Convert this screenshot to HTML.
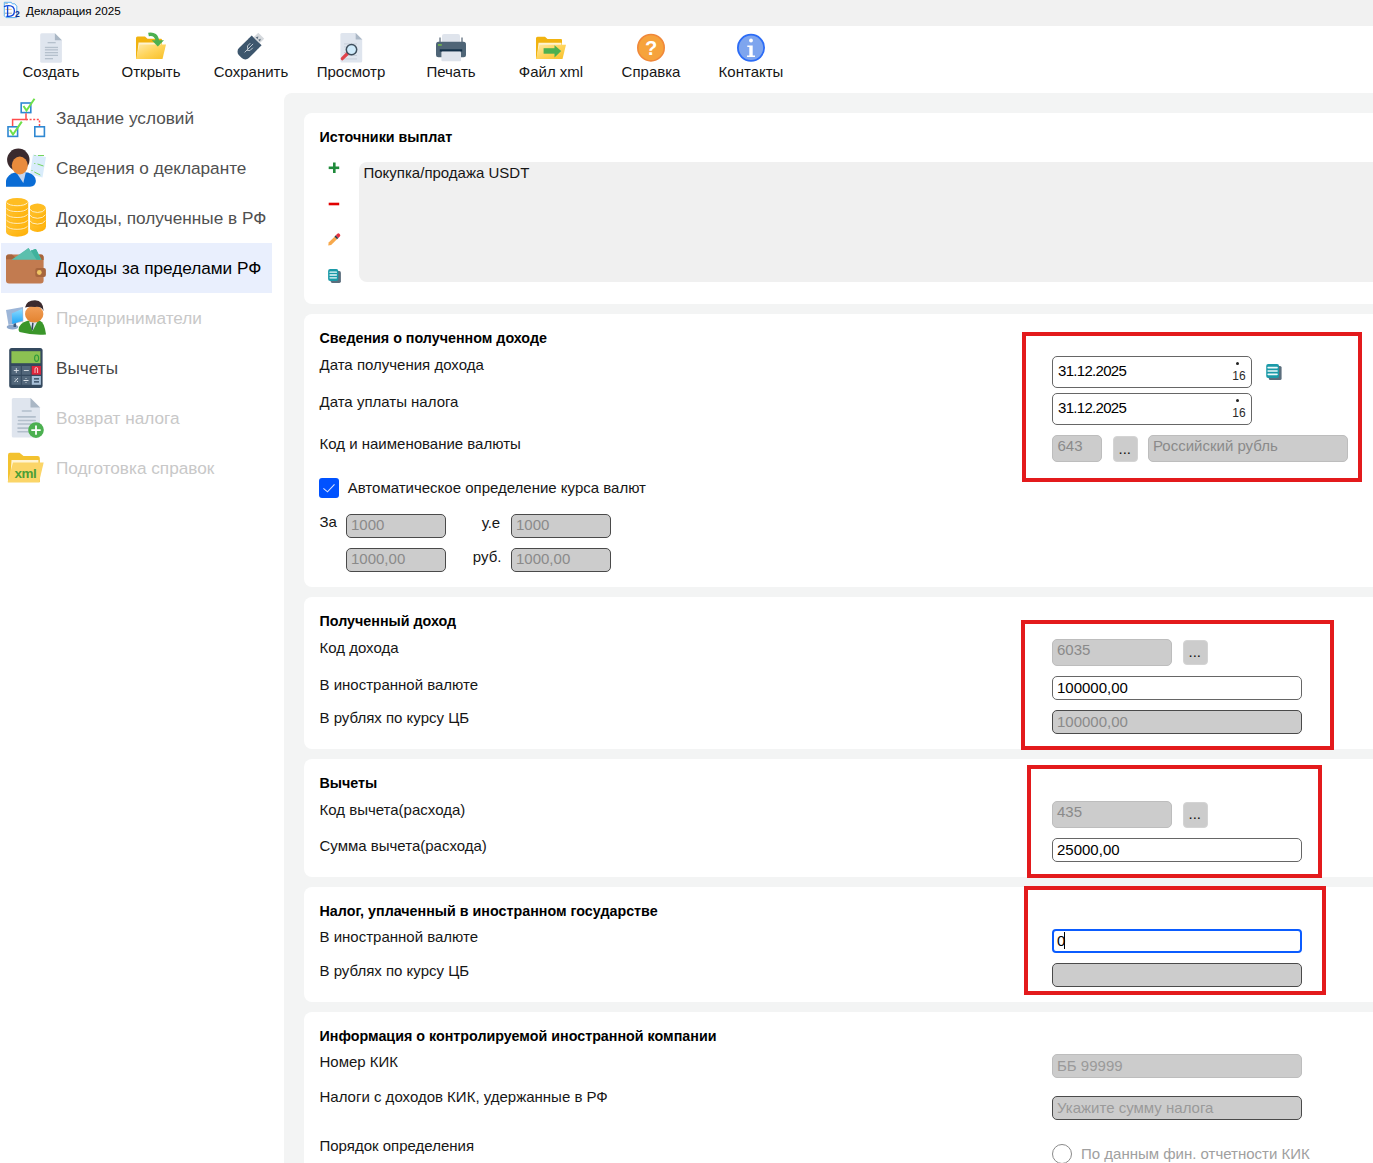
<!DOCTYPE html>
<html><head><meta charset="utf-8"><title>Декларация 2025</title>
<style>
html,body{margin:0;padding:0;width:1373px;height:1163px;overflow:hidden;background:#fff;position:relative}
.t{position:absolute;white-space:nowrap;font-family:"Liberation Sans",sans-serif}
.b{position:absolute}
</style></head><body>
<div class="b" style="left:0px;top:0px;width:1373px;height:25.5px;background:#f1f1f1"></div>
<div class="t" style="left:26px;top:3.15px;font-size:11.7px;line-height:15px;font-weight:400;color:#000;">Декларация 2025</div>
<div class="t" style="left:-9.0px;width:120px;text-align:center;top:61.70px;font-size:15px;line-height:19px;font-weight:400;color:#161616">Создать</div>
<div class="t" style="left:91.0px;width:120px;text-align:center;top:61.70px;font-size:15px;line-height:19px;font-weight:400;color:#161616">Открыть</div>
<div class="t" style="left:191.0px;width:120px;text-align:center;top:61.70px;font-size:15px;line-height:19px;font-weight:400;color:#161616">Сохранить</div>
<div class="t" style="left:291.0px;width:120px;text-align:center;top:61.70px;font-size:15px;line-height:19px;font-weight:400;color:#161616">Просмотр</div>
<div class="t" style="left:391.0px;width:120px;text-align:center;top:61.70px;font-size:15px;line-height:19px;font-weight:400;color:#161616">Печать</div>
<div class="t" style="left:491.0px;width:120px;text-align:center;top:61.70px;font-size:15px;line-height:19px;font-weight:400;color:#161616">Файл xml</div>
<div class="t" style="left:591.0px;width:120px;text-align:center;top:61.70px;font-size:15px;line-height:19px;font-weight:400;color:#161616">Справка</div>
<div class="t" style="left:691.0px;width:120px;text-align:center;top:61.70px;font-size:15px;line-height:19px;font-weight:400;color:#161616">Контакты</div>
<div class="b" style="left:1px;top:243px;width:271px;height:50px;background:#e9effd"></div>
<div class="t" style="left:56px;top:107.04px;font-size:17.2px;line-height:22px;font-weight:400;color:#505050;">Задание условий</div>
<div class="t" style="left:56px;top:157.04px;font-size:17.2px;line-height:22px;font-weight:400;color:#505050;">Сведения о декларанте</div>
<div class="t" style="left:56px;top:207.04px;font-size:17.2px;line-height:22px;font-weight:400;color:#505050;">Доходы, полученные в РФ</div>
<div class="t" style="left:56px;top:257.04px;font-size:17.2px;line-height:22px;font-weight:400;color:#000;">Доходы за пределами РФ</div>
<div class="t" style="left:56px;top:307.04px;font-size:17.2px;line-height:22px;font-weight:400;color:#c8c8c8;">Предприниматели</div>
<div class="t" style="left:56px;top:357.04px;font-size:17.2px;line-height:22px;font-weight:400;color:#484848;">Вычеты</div>
<div class="t" style="left:56px;top:407.04px;font-size:17.2px;line-height:22px;font-weight:400;color:#c8c8c8;">Возврат налога</div>
<div class="t" style="left:56px;top:457.04px;font-size:17.2px;line-height:22px;font-weight:400;color:#c8c8c8;">Подготовка справок</div>
<div class="b" style="left:284px;top:93px;width:1200px;height:1200px;background:#f3f4f4;border-radius:8px"></div>
<div class="b" style="left:304px;top:112.5px;width:1200px;height:191.5px;background:#fff;border-radius:8px"></div>
<div class="b" style="left:304px;top:314px;width:1200px;height:273px;background:#fff;border-radius:8px"></div>
<div class="b" style="left:304px;top:597px;width:1200px;height:152px;background:#fff;border-radius:8px"></div>
<div class="b" style="left:304px;top:759px;width:1200px;height:118px;background:#fff;border-radius:8px"></div>
<div class="b" style="left:304px;top:887px;width:1200px;height:115px;background:#fff;border-radius:8px"></div>
<div class="b" style="left:304px;top:1012px;width:1200px;height:300px;background:#fff;border-radius:8px"></div>
<div class="t" style="left:319.5px;top:127.55px;font-size:14.3px;line-height:18px;font-weight:700;color:#000;">Источники выплат</div>
<div class="b" style="left:359px;top:162px;width:1200px;height:120px;background:#f0f0f0;border-radius:8px"></div>
<div class="t" style="left:363.5px;top:162.70px;font-size:15px;line-height:19px;font-weight:400;color:#161616;">Покупка/продажа USDT</div>
<div class="t" style="left:319.5px;top:329.05px;font-size:14.3px;line-height:18px;font-weight:700;color:#000;">Сведения о полученном доходе</div>
<div class="t" style="left:319.5px;top:354.70px;font-size:15px;line-height:19px;font-weight:400;color:#161616;">Дата получения дохода</div>
<div class="t" style="left:319.5px;top:391.70px;font-size:15px;line-height:19px;font-weight:400;color:#161616;">Дата уплаты налога</div>
<div class="t" style="left:319.5px;top:433.70px;font-size:15px;line-height:19px;font-weight:400;color:#161616;">Код и наименование валюты</div>
<div class="t" style="left:347.7px;top:478.20px;font-size:15px;line-height:19px;font-weight:400;color:#161616;">Автоматическое определение курса валют</div>
<div class="t" style="left:319.5px;top:512.10px;font-size:15px;line-height:19px;font-weight:400;color:#161616;">За</div>
<div class="t" style="left:481.7px;top:513.00px;font-size:15px;line-height:19px;font-weight:400;color:#161616;">у.е</div>
<div class="t" style="left:472.8px;top:546.70px;font-size:15px;line-height:19px;font-weight:400;color:#161616;">руб.</div>
<div class="t" style="left:319.5px;top:612.05px;font-size:14.3px;line-height:18px;font-weight:700;color:#000;">Полученный доход</div>
<div class="t" style="left:319.5px;top:637.70px;font-size:15px;line-height:19px;font-weight:400;color:#161616;">Код дохода</div>
<div class="t" style="left:319.5px;top:674.70px;font-size:15px;line-height:19px;font-weight:400;color:#161616;">В иностранной валюте</div>
<div class="t" style="left:319.5px;top:708.20px;font-size:15px;line-height:19px;font-weight:400;color:#161616;">В рублях по курсу ЦБ</div>
<div class="t" style="left:319.5px;top:774.05px;font-size:14.3px;line-height:18px;font-weight:700;color:#000;">Вычеты</div>
<div class="t" style="left:319.5px;top:799.70px;font-size:15px;line-height:19px;font-weight:400;color:#161616;">Код вычета(расхода)</div>
<div class="t" style="left:319.5px;top:836.20px;font-size:15px;line-height:19px;font-weight:400;color:#161616;">Сумма вычета(расхода)</div>
<div class="t" style="left:319.5px;top:901.65px;font-size:14.3px;line-height:18px;font-weight:700;color:#000;">Налог, уплаченный в иностранном государстве</div>
<div class="t" style="left:319.5px;top:927.40px;font-size:15px;line-height:19px;font-weight:400;color:#161616;">В иностранной валюте</div>
<div class="t" style="left:319.5px;top:961.40px;font-size:15px;line-height:19px;font-weight:400;color:#161616;">В рублях по курсу ЦБ</div>
<div class="t" style="left:319.5px;top:1027.05px;font-size:14.3px;line-height:18px;font-weight:700;color:#000;">Информация о контролируемой иностранной компании</div>
<div class="t" style="left:319.5px;top:1052.00px;font-size:15px;line-height:19px;font-weight:400;color:#161616;">Номер КИК</div>
<div class="t" style="left:319.5px;top:1086.50px;font-size:15px;line-height:19px;font-weight:400;color:#161616;">Налоги с доходов КИК, удержанные в РФ</div>
<div class="t" style="left:319.5px;top:1136.30px;font-size:15px;line-height:19px;font-weight:400;color:#161616;">Порядок определения</div>
<div class="b" style="left:1052px;top:356px;width:200px;height:32px;background:#fff;border:1px solid #666;border-radius:5px;box-sizing:border-box"></div>
<div class="t" style="left:1058px;top:360.90px;font-size:15px;line-height:19px;font-weight:400;color:#000;"><span style="letter-spacing:-0.7px">31.12.2025</span></div>
<div class="b" style="left:1052px;top:393px;width:200px;height:32px;background:#fff;border:1px solid #666;border-radius:5px;box-sizing:border-box"></div>
<div class="t" style="left:1058px;top:397.90px;font-size:15px;line-height:19px;font-weight:400;color:#000;"><span style="letter-spacing:-0.7px">31.12.2025</span></div>
<div class="t" style="left:1232.3px;top:369.34px;font-size:12px;line-height:15px;font-weight:400;color:#2a2a2a;">16</div>
<div class="b" style="left:1236px;top:362px;width:3px;height:3px;background:#222;border-radius:50%"></div>
<div class="t" style="left:1232.3px;top:406.34px;font-size:12px;line-height:15px;font-weight:400;color:#2a2a2a;">16</div>
<div class="b" style="left:1236px;top:399px;width:3px;height:3px;background:#222;border-radius:50%"></div>
<div class="b" style="left:1052px;top:435px;width:50px;height:27px;background:#cccccc;border:1px solid #bdbdbd;border-radius:5px;box-sizing:border-box"></div>
<div class="t" style="left:1057.5px;top:436.40px;font-size:15px;line-height:19px;font-weight:400;color:#8a8a8a;">643</div>
<div class="b" style="left:1112.5px;top:435.5px;width:25px;height:26px;background:#cccccc;border:1px solid #d4d4d4;border-radius:4px;box-sizing:border-box"></div>
<div class="t" style="left:1118.5px;top:438.70px;font-size:15px;line-height:19px;font-weight:400;color:#111;">...</div>
<div class="b" style="left:1148px;top:435px;width:200px;height:27px;background:#cccccc;border:1px solid #bdbdbd;border-radius:5px;box-sizing:border-box"></div>
<div class="t" style="left:1153px;top:436.40px;font-size:15px;line-height:19px;font-weight:400;color:#8a8a8a;">Российский рубль</div>
<div class="b" style="left:1022px;top:332px;width:340px;height:150px;border:4px solid #e31a1c;box-sizing:border-box"></div>
<div class="b" style="left:319px;top:478px;width:20px;height:20px;background:#0052ff;border-radius:3px"></div>
<svg class="b" style="left:319px;top:478px" width="20" height="20"><path d="M4.4 10.3 L8.5 13.8 L15.5 6.3" stroke="#d6e2ff" stroke-width="1.1" fill="none"/></svg>
<div class="b" style="left:346px;top:514px;width:100px;height:24px;background:#cccccc;border:1px solid #4a4a4a;border-radius:5px;box-sizing:border-box"></div>
<div class="t" style="left:351px;top:515.30px;font-size:15px;line-height:19px;font-weight:400;color:#8a8a8a;">1000</div>
<div class="b" style="left:511px;top:514px;width:100px;height:24px;background:#cccccc;border:1px solid #4a4a4a;border-radius:5px;box-sizing:border-box"></div>
<div class="t" style="left:516px;top:515.30px;font-size:15px;line-height:19px;font-weight:400;color:#8a8a8a;">1000</div>
<div class="b" style="left:346px;top:548px;width:100px;height:24px;background:#cccccc;border:1px solid #4a4a4a;border-radius:5px;box-sizing:border-box"></div>
<div class="t" style="left:351px;top:549.30px;font-size:15px;line-height:19px;font-weight:400;color:#8a8a8a;">1000,00</div>
<div class="b" style="left:511px;top:548px;width:100px;height:24px;background:#cccccc;border:1px solid #4a4a4a;border-radius:5px;box-sizing:border-box"></div>
<div class="t" style="left:516px;top:549.30px;font-size:15px;line-height:19px;font-weight:400;color:#8a8a8a;">1000,00</div>
<div class="b" style="left:1052px;top:639px;width:120px;height:27px;background:#cccccc;border:1px solid #bdbdbd;border-radius:5px;box-sizing:border-box"></div>
<div class="t" style="left:1057px;top:640.20px;font-size:15px;line-height:19px;font-weight:400;color:#8a8a8a;">6035</div>
<div class="b" style="left:1182.5px;top:640px;width:25px;height:25px;background:#cccccc;border:1px solid #d4d4d4;border-radius:4px;box-sizing:border-box"></div>
<div class="t" style="left:1188.5px;top:642.20px;font-size:15px;line-height:19px;font-weight:400;color:#111;">...</div>
<div class="b" style="left:1052px;top:676px;width:250px;height:24px;background:#fff;border:1px solid #666;border-radius:5px;box-sizing:border-box"></div>
<div class="t" style="left:1057px;top:677.70px;font-size:15px;line-height:19px;font-weight:400;color:#000;">100000,00</div>
<div class="b" style="left:1052px;top:710px;width:250px;height:24px;background:#cccccc;border:1px solid #4a4a4a;border-radius:5px;box-sizing:border-box"></div>
<div class="t" style="left:1057px;top:711.70px;font-size:15px;line-height:19px;font-weight:400;color:#8a8a8a;">100000,00</div>
<div class="b" style="left:1021px;top:620px;width:313px;height:130px;border:4px solid #e31a1c;box-sizing:border-box"></div>
<div class="b" style="left:1052px;top:801px;width:120px;height:27px;background:#cccccc;border:1px solid #bdbdbd;border-radius:5px;box-sizing:border-box"></div>
<div class="t" style="left:1057px;top:802.20px;font-size:15px;line-height:19px;font-weight:400;color:#8a8a8a;">435</div>
<div class="b" style="left:1182.5px;top:801.5px;width:25px;height:26px;background:#cccccc;border:1px solid #d4d4d4;border-radius:4px;box-sizing:border-box"></div>
<div class="t" style="left:1188.5px;top:803.70px;font-size:15px;line-height:19px;font-weight:400;color:#111;">...</div>
<div class="b" style="left:1052px;top:838px;width:250px;height:24px;background:#fff;border:1px solid #666;border-radius:5px;box-sizing:border-box"></div>
<div class="t" style="left:1057px;top:839.70px;font-size:15px;line-height:19px;font-weight:400;color:#000;">25000,00</div>
<div class="b" style="left:1027px;top:765px;width:295px;height:113px;border:4px solid #e31a1c;box-sizing:border-box"></div>
<div class="b" style="left:1052px;top:929px;width:250px;height:23.5px;background:#fff;border:2px solid #0b5cff;border-radius:4px;box-sizing:border-box"></div>
<div class="t" style="left:1057px;top:930.70px;font-size:15px;line-height:19px;font-weight:400;color:#000;">0</div>
<div class="b" style="left:1064px;top:932.3px;width:1.2px;height:16.4px;background:#000"></div>
<div class="b" style="left:1052px;top:963px;width:250px;height:23.5px;background:#cccccc;border:1px solid #4a4a4a;border-radius:5px;box-sizing:border-box"></div>
<div class="b" style="left:1024px;top:886px;width:302px;height:109px;border:4px solid #e31a1c;box-sizing:border-box"></div>
<div class="b" style="left:1052px;top:1054px;width:250px;height:24px;background:#cccccc;border:1px solid #bdbdbd;border-radius:5px;box-sizing:border-box"></div>
<div class="t" style="left:1057px;top:1055.70px;font-size:15px;line-height:19px;font-weight:400;color:#9a9a9a;">ББ 99999</div>
<div class="b" style="left:1052px;top:1096px;width:250px;height:24px;background:#cccccc;border:1px solid #4a4a4a;border-radius:5px;box-sizing:border-box"></div>
<div class="t" style="left:1057px;top:1097.70px;font-size:15px;line-height:19px;font-weight:400;color:#9a9a9a;">Укажите сумму налога</div>
<div class="b" style="left:1052px;top:1144px;width:20px;height:20px;border:1px solid #8a8a8a;border-radius:50%;box-sizing:border-box;background:#fff"></div>
<div class="t" style="left:1081px;top:1144.00px;font-size:15px;line-height:19px;font-weight:400;color:#a0a0a0;">По данным фин. отчетности КИК</div>
<svg class="b" style="left:0;top:0" width="1373" height="1163"><path d="M4.3 2.3 H11.3 L12.2 3.8 H14.8 L16.8 6.2 V17.6 H6 L4.3 15.8 Z" fill="#fbfdff" stroke="#4aa8ee" stroke-width="0.9"/><path d="M5.2 3.6 h2.6" stroke="#9a9a9a" stroke-width="0.8"/><path d="M5.4 9.4 h6.4" stroke="#f3b05a" stroke-width="0.8"/><path d="M5 13.2 h6.8" stroke="#8a8a8a" stroke-width="0.8"/><path d="M4 6.8 Q6 5.6 8.7 5.6 Q14.4 5.6 14.4 11 Q14.4 16.3 9 16.3 H6.3 M7.6 6 V16.3" fill="none" stroke="#0c43d9" stroke-width="1.3"/><text x="15.1" y="17" font-family="Liberation Sans" font-size="8.5" font-weight="700" fill="#0a2a8a">2</text>
<path d="M41.7 33.3 H54.900000000000006 L61.900000000000006 40.3 V61.199999999999996 Q61.900000000000006 62.699999999999996 60.400000000000006 62.699999999999996 H41.7 Q40.2 62.699999999999996 40.2 61.199999999999996 V34.8 Q40.2 33.3 41.7 33.3 Z" fill="#dfe5ee"/><path d="M54.900000000000006 33.3 L61.900000000000006 40.3 H54.900000000000006 Z" fill="#aab7c5"/>
<rect x="47.6" y="42.0" width="8.100000000000001" height="1.3" fill="#b5c0cc"/>
<rect x="44.9" y="46.8" width="13.100000000000001" height="1.3" fill="#b5c0cc"/>
<rect x="44.9" y="49.199999999999996" width="13.100000000000001" height="1.3" fill="#b5c0cc"/>
<rect x="44.9" y="52.0" width="13.100000000000001" height="1.3" fill="#b5c0cc"/>
<rect x="44.9" y="54.699999999999996" width="13.100000000000001" height="1.3" fill="#b5c0cc"/>
<rect x="44.9" y="58.0" width="8.100000000000001" height="1.3" fill="#b5c0cc"/>
<defs><linearGradient id="fg" x1="0" y1="0" x2="1" y2="1"><stop offset="0" stop-color="#ffe9a6"/><stop offset="0.5" stop-color="#ffd45a"/><stop offset="1" stop-color="#f7bf25"/></linearGradient><linearGradient id="coin" x1="0" y1="0" x2="1" y2="1"><stop offset="0" stop-color="#ffc63a"/><stop offset="1" stop-color="#ffae00"/></linearGradient></defs>
<path d="M136 38.0 Q136 36.5 137.5 36.5 H145 L147.5 38.7 H161 Q162 38.7 162 40.0 V59.1 H136 Z" fill="#f1b310"/><path d="M138.5 42.5 H161.5 V59.1 H136.8 Z" fill="#fff3cf"/><path d="M139.5 44.5 H166 L162.5 59.1 H136 Z" fill="url(#fg)"/>
<path d="M148.5 34.5 Q156.5 33 157.5 41.5" fill="none" stroke="#4cb050" stroke-width="3.6"/><path d="M151.8 40.2 H164 L157.8 46.5 Z" fill="#4cb050"/>
<g transform="translate(251,46) rotate(-45)"><rect x="-15" y="-7" width="22" height="14" rx="5" fill="#3d566d"/><rect x="3" y="-7" width="5" height="14" fill="#3d566d"/><rect x="8" y="-4.2" width="6.5" height="8.4" fill="#d5d9dd"/><path d="M9.5 -2.8 L12 -1.5 L9.5 -0.2 Z M9.5 0.6 L12 1.9 L9.5 3.2 Z" fill="#5d6e7e"/><path d="M-9 0 H3 M-4.5 0 L-2.5 -2.5 H1.5 M-6 0 L-4 2.5 H0" stroke="#c9d2da" stroke-width="0.9" fill="none"/></g>
<path d="M341.9 32.9 H355.7 L362.2 39.4 V60.9 Q362.2 62.4 360.7 62.4 H341.9 Q340.4 62.4 340.4 60.9 V34.4 Q340.4 32.9 341.9 32.9 Z" fill="#dfe5ee"/><path d="M355.7 32.9 L362.2 39.4 H355.7 Z" fill="#aab7c5"/>
<rect x="344" y="43.5" width="13" height="0.9" fill="#c3ccd6"/>
<rect x="344" y="46.5" width="13" height="0.9" fill="#c3ccd6"/>
<rect x="344" y="52" width="13" height="0.9" fill="#c3ccd6"/>
<rect x="344" y="55" width="13" height="0.9" fill="#c3ccd6"/>
<rect x="344" y="58.5" width="13" height="0.9" fill="#c3ccd6"/>
<path d="M347.5 53.5 L342.3 58.7" stroke="#e0434c" stroke-width="3.2" stroke-linecap="round"/><circle cx="351.5" cy="49.6" r="5.2" fill="#cfeafa" stroke="#3f4f5d" stroke-width="1.5"/>
<rect x="442" y="34" width="18" height="10" rx="2" fill="#dfe4ec"/><path d="M440 42 V37.5 M462 42 V37.5" stroke="#2f4356" stroke-width="1"/><rect x="436" y="41.7" width="30" height="15.5" rx="2.5" fill="#4f6577"/><rect x="438" y="44.3" width="3.8" height="1.3" fill="#7ac943"/><rect x="439.8" y="49.3" width="22.4" height="2.2" fill="#15324a"/><rect x="441.4" y="51.5" width="19.6" height="9.8" rx="1" fill="#dfe4ec"/>
<path d="M536 38.2 Q536 36.7 537.5 36.7 H545 L547.5 38.900000000000006 H561 Q562 38.900000000000006 562 40.2 V59.1 H536 Z" fill="#f1b310"/><path d="M538.5 42.7 H561.5 V59.1 H536.8 Z" fill="#fff3cf"/><path d="M539.5 44.7 H566 L562.5 59.1 H536 Z" fill="url(#fg)"/>
<rect x="543.6" y="48.2" width="11.5" height="5.5" fill="#4cb050"/><path d="M554.5 45.3 L561.2 51 L554.5 57.5 Z" fill="#4cb050"/>
<circle cx="651" cy="47.7" r="13.2" fill="#f6a33c" stroke="#f0883a" stroke-width="1.6"/><text x="651" y="55.3" text-anchor="middle" font-family="Liberation Sans" font-size="20" font-weight="700" fill="#fff">?</text>
<circle cx="751" cy="47.8" r="13.1" fill="#7ea5ee" stroke="#2c6cf6" stroke-width="1.8"/><circle cx="751" cy="40.5" r="1.9" fill="#fff"/><path d="M747.3 45.5 H752.7 V55.5 H755 V57 H747 V55.5 H749.3 V47 H747.3 Z" fill="#fff"/>
<g fill="none" stroke="#2f88d2" stroke-width="1.6"><rect x="21.2" y="103" width="9.6" height="9.6"/><rect x="8" y="126.8" width="9.6" height="9.6"/><rect x="34.8" y="126.8" width="9.6" height="9.6"/></g><path d="M26 113.3 V119.5 H12.6 V126" fill="none" stroke="#ff4d4d" stroke-width="1.5"/><path d="M26 119.5 H39.5 V126" fill="none" stroke="#ff4d4d" stroke-width="1.5" stroke-dasharray="2 1.6"/><path d="M23.5 106 L26.5 110.5 L34.5 98.8" fill="none" stroke="#6ee04b" stroke-width="2"/><path d="M10 129.8 L13 134.5 L21.8 121.6" fill="none" stroke="#6ee04b" stroke-width="2"/>
<path d="M33 154.5 L46 157 L42.5 177.5 L30 174.5 Z" fill="#d9ecfb"/><path d="M34.5 155.5 h1 M38 155.5 h6 M34.3 163.5 h1 M37.5 164 l6 2 M31.5 170.5 h1 M34.3 172 l6 3" stroke="#74d45a" stroke-width="1"/><circle cx="18.3" cy="159.8" r="11.2" fill="#3b2a2e"/><path d="M6 186.7 V180.5 Q8 174 15 172.5 H28 Q35.9 175 35.9 181 Q35.5 186.7 30 186.7 Z" fill="#0a6cd5"/><path d="M16.5 172.8 L25.8 172.5 L23.3 183 Z" fill="#c7d6ee"/><ellipse cx="19.8" cy="165.5" rx="8" ry="9" fill="#e98b3c"/>
<path d="M6 226.2 V232.1 A11.1 4.6 0 0 0 28.2 232.1 V226.2 Z" fill="url(#coin)"/><path d="M6 220.3 V226.20000000000002 A11.1 4.6 0 0 0 28.2 226.20000000000002 V220.3 Z" fill="url(#coin)"/><path d="M6 214.4 V220.3 A11.1 4.6 0 0 0 28.2 220.3 V214.4 Z" fill="url(#coin)"/><path d="M6 208.5 V214.4 A11.1 4.6 0 0 0 28.2 214.4 V208.5 Z" fill="url(#coin)"/><path d="M6 202.6 V208.5 A11.1 4.6 0 0 0 28.2 208.5 V202.6 Z" fill="url(#coin)"/><ellipse cx="17.1" cy="202.6" rx="11.1" ry="4.6" fill="#ffbd22"/><path d="M6.6 202.6 A11.1 4.6 0 0 0 27.599999999999998 202.6" fill="none" stroke="#fff3d0" stroke-width="0.9"/><path d="M6.6 208.5 A11.1 4.6 0 0 0 27.599999999999998 208.5" fill="none" stroke="#fff3d0" stroke-width="0.9"/><path d="M6.6 214.4 A11.1 4.6 0 0 0 27.599999999999998 214.4" fill="none" stroke="#fff3d0" stroke-width="0.9"/><path d="M6.6 220.3 A11.1 4.6 0 0 0 27.599999999999998 220.3" fill="none" stroke="#fff3d0" stroke-width="0.9"/><path d="M6.6 226.2 A11.1 4.6 0 0 0 27.599999999999998 226.2" fill="none" stroke="#fff3d0" stroke-width="0.9"/>
<clipPath id="rc"><rect x="30" y="195" width="20" height="45"/></clipPath><g clip-path="url(#rc)"><path d="M29 220.6 V226.4 A8.5 5.5 0 0 0 46 226.4 V220.6 Z" fill="url(#coin)"/><path d="M29 214.8 V220.60000000000002 A8.5 5.5 0 0 0 46 220.60000000000002 V214.8 Z" fill="url(#coin)"/><path d="M29 209.0 V214.8 A8.5 5.5 0 0 0 46 214.8 V209.0 Z" fill="url(#coin)"/><ellipse cx="37.5" cy="209" rx="8.5" ry="5.5" fill="#ffbd22"/><path d="M29.6 209.0 A8.5 5.5 0 0 0 45.4 209.0" fill="none" stroke="#fff3d0" stroke-width="0.9"/><path d="M29.6 214.8 A8.5 5.5 0 0 0 45.4 214.8" fill="none" stroke="#fff3d0" stroke-width="0.9"/><path d="M29.6 220.6 A8.5 5.5 0 0 0 45.4 220.6" fill="none" stroke="#fff3d0" stroke-width="0.9"/></g>
<path d="M13 260 L28.5 248 L30.5 251 L35.8 249 L41.5 260 Z" fill="#5cbfad"/><path d="M31 250.5 L35.8 249 L41.5 260 H36 Z" fill="#41b39e"/><rect x="6" y="254.6" width="37.6" height="29" rx="3" fill="#c27b50"/><path d="M6 257.5 Q6 254.6 9 254.6 H12 L17.5 259.3 H6 Z" fill="#a7653d"/><path d="M38.5 254.6 H40.6 Q43.6 254.6 43.6 257.5 V260 H41.5 Z" fill="#a7653d"/><path d="M11.5 259.8 L28.5 248 L30.5 251 L35.8 249 L41.5 259.8 Z" fill="#5cbfad"/><path d="M31 250.8 L35.8 249 L41.2 259.8 H36.5 Z" fill="#40b29d"/><rect x="35.3" y="268" width="10.6" height="9" rx="2" fill="#a7653d"/><circle cx="39.3" cy="272.5" r="2.4" fill="#f0c564"/>
<defs><linearGradient id="scr" x1="0" y1="0" x2="0" y2="1"><stop offset="0" stop-color="#8fdcff"/><stop offset="1" stop-color="#1ea5f7"/></linearGradient><linearGradient id="face" x1="0" y1="0" x2="0" y2="1"><stop offset="0" stop-color="#f2a05a"/><stop offset="1" stop-color="#e3832f"/></linearGradient></defs>
<ellipse cx="12.5" cy="327" rx="5.8" ry="2.6" fill="#8ea8cc"/><rect x="13.5" y="320" width="2.6" height="7" fill="#3d5a80"/><path d="M6 310 L23 307 L23.3 321.5 L8.5 325 Z" fill="#9db6d8"/><path d="M11.8 313.5 L22.3 308.8 L22.8 320.5 L12.3 324 Z" fill="url(#scr)"/><path d="M18.5 330 Q19 323 27.5 320.8 H40 Q44.5 322.5 46 334.5 Q33 335.5 19.5 332 Z" fill="#3a962a"/><path d="M29 321.5 H37.5 L32.5 331 Z" fill="#d9e4f0"/><path d="M32.2 322.5 L31.3 329 L32.8 330.5 L33.6 323 Z" fill="#34475a"/><ellipse cx="34.2" cy="314" rx="9.2" ry="8.6" fill="url(#face)"/><path d="M25 307.5 Q26.5 300.2 35 300.2 Q43.5 300.5 43.6 311 Q41 306 35 307 Q29 306.5 25 307.5 Z" fill="#3b2a2e"/>
<rect x="9.2" y="348" width="33.4" height="40" rx="2.5" fill="#34495e"/><rect x="11.4" y="351.2" width="29" height="12" fill="#8cc152"/><ellipse cx="36.6" cy="358.2" rx="2" ry="3.2" fill="none" stroke="#2e9a3a" stroke-width="1.1"/>
<rect x="11.4" y="366" width="9.4" height="8.699999999999989" fill="#52677b"/>
<rect x="21.8" y="366" width="8.8" height="8.699999999999989" fill="#52677b"/>
<rect x="31.7" y="366" width="9.2" height="8.699999999999989" fill="#e0263c"/>
<rect x="11.4" y="376" width="9.4" height="8.800000000000011" fill="#52677b"/>
<rect x="21.8" y="376" width="8.8" height="8.800000000000011" fill="#52677b"/>
<rect x="31.7" y="376" width="9.2" height="8.800000000000011" fill="#a8c0d8"/>
<path d="M13.8 370.5 h5 M16.3 368 v5 M23.8 370.5 h5" stroke="#d9e0e6" stroke-width="0.9"/><path d="M35 373 V369 Q35 367.5 36.3 367.5 Q37.6 367.5 37.6 369 V373" fill="none" stroke="#f4d0d5" stroke-width="0.9"/><path d="M14.5 382 l3.5 -4 M15 378.5 l1 1 M17 381 l1 1 M23.5 380.5 h5 M26 378 v0.9 M26 382 v0.9" stroke="#d9e0e6" stroke-width="1"/><path d="M34 378.8 h5 M34 381.8 h5" stroke="#243a50" stroke-width="1.3"/>
<path d="M13.3 398.1 H30.5 L40.0 407.6 V436.0 Q40.0 437.5 38.5 437.5 H13.3 Q11.8 437.5 11.8 436.0 V399.6 Q11.8 398.1 13.3 398.1 Z" fill="#dfe5ee"/><path d="M30.5 398.1 L40.0 407.6 H30.5 Z" fill="#aab7c5"/>
<rect x="21.6" y="410.2" width="10.299999999999997" height="1.6" rx="0.8" fill="#b3bfcc"/>
<rect x="17.2" y="416.09999999999997" width="18.8" height="1.6" rx="0.8" fill="#b3bfcc"/>
<rect x="17.8" y="419.7" width="18.2" height="1.6" rx="0.8" fill="#b3bfcc"/>
<rect x="17.2" y="423.2" width="15.8" height="1.6" rx="0.8" fill="#b3bfcc"/>
<rect x="17.2" y="427.3" width="14.8" height="1.6" rx="0.8" fill="#b3bfcc"/>
<rect x="17.2" y="431.0" width="12.8" height="1.6" rx="0.8" fill="#b3bfcc"/>
<circle cx="36" cy="430.1" r="7.8" fill="#4cb050"/><path d="M31.3 430.1 h9.4 M36 425.4 v9.4" stroke="#fff" stroke-width="1.8"/>
<path d="M8 455 Q8 452.8 10 452.8 H19.5 L23.5 456 H37.5 Q39.8 456 39.8 458 V482.3 H8 Z" fill="#f3c22f"/><path d="M11.5 460 H38.5 V482 H10 Z" fill="#fff4d3"/><path d="M13 462.5 H43.7 L39 482.3 H7.6 Z" fill="#fbd568"/><text x="14.6" y="478" font-family="Liberation Sans" font-size="13.5" font-weight="700" fill="#4e9f36" letter-spacing="-0.6">xml</text>
<rect x="333" y="162.5" width="2.6" height="10.5" fill="#1f8a3b"/><rect x="328.7" y="166.5" width="10.5" height="2.6" fill="#1f8a3b"/>
<rect x="328.7" y="202.7" width="10.5" height="2.6" fill="#e10000"/>
<g transform="translate(333.8,239.9) rotate(-45) scale(0.92)"><path d="M-8.5 0 L-6 -1.9 H3 V1.9 H-6 Z" fill="#f7a94d"/><rect x="3" y="-2" width="2" height="4" fill="#2f3b45"/><path d="M5 -2 H7.5 Q9 -2 9 0 Q9 2 7.5 2 H5 Z" fill="#e5303e"/></g>
<rect x="330.70000000000005" y="271.1" width="10.2" height="11.8" rx="1.6" fill="#5b6e7d"/><rect x="328.1" y="269.1" width="10.2" height="11.8" rx="2" fill="#1b9aa8"/><path d="M330.0 272.168 h6.3999999999999995 M330.0 275.0 h6.3999999999999995 M330.0 277.83200000000005 h6.3999999999999995" stroke="#eef9fa" stroke-width="1.30" stroke-linecap="round"/>
<rect x="1268.8" y="366" width="12.8" height="14" rx="1.6" fill="#5b6e7d"/><rect x="1266.2" y="364" width="12.8" height="14" rx="2" fill="#1b9aa8"/><path d="M1268.1000000000001 367.64 h9.0 M1268.1000000000001 371.0 h9.0 M1268.1000000000001 374.36 h9.0" stroke="#eef9fa" stroke-width="1.54" stroke-linecap="round"/></svg>
</body></html>
